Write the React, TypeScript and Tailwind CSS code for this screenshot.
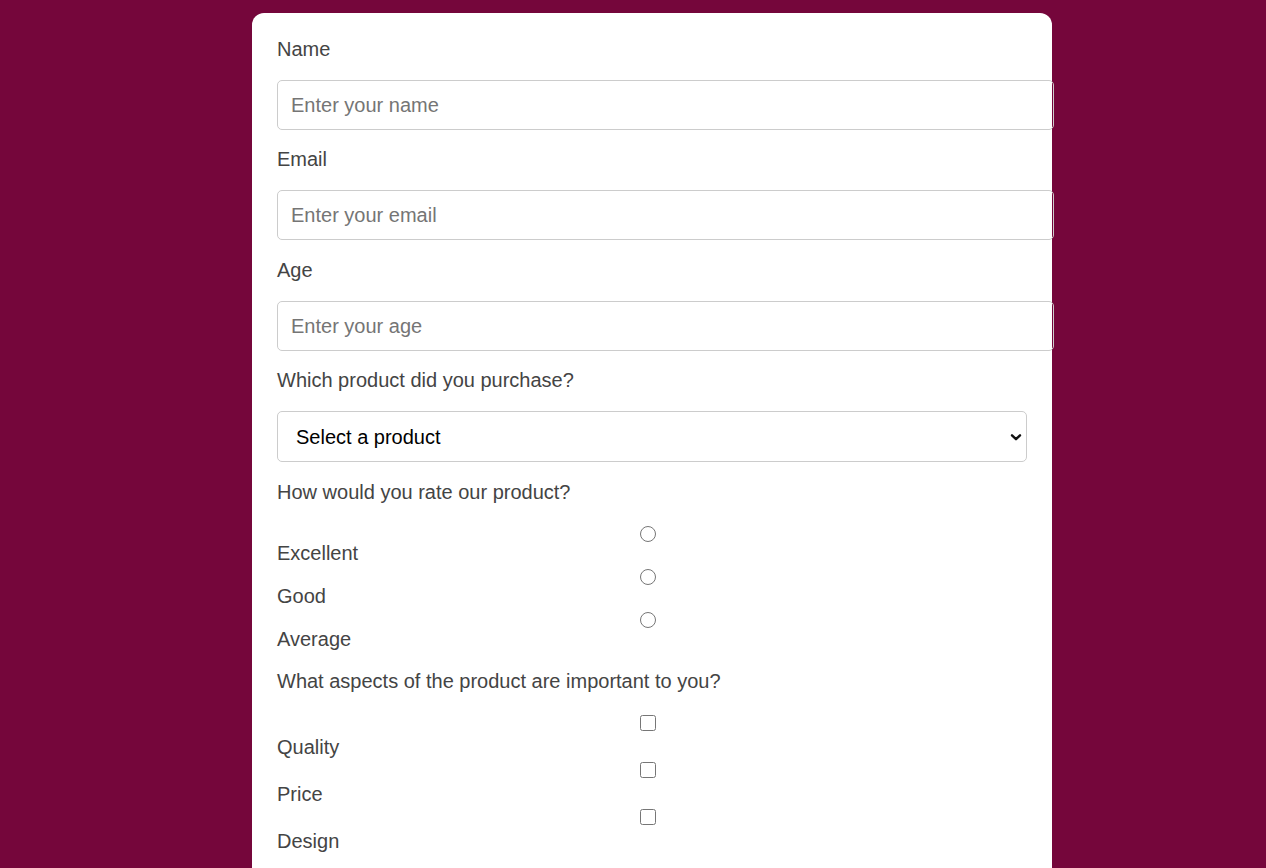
import React from 'react';

const font = { fontFamily: '"Liberation Sans", Arial, sans-serif' };

function Label({ children, className = '' }: { children: React.ReactNode; className?: string }) {
  return <label className={`block text-[20px] leading-[24px] text-[#444] ${className}`}>{children}</label>;
}

function TextField({ label, type, placeholder, mb }: { label: string; type: string; placeholder: string; mb: string }) {
  return (
    <div className={mb}>
      <Label className="mb-[19px]">{label}</Label>
      <input
        type={type}
        placeholder={placeholder}
        className="block h-[50px] w-[777px] rounded-[5px] border border-[#ccc] px-[13px] text-[20px] text-[#333] placeholder:text-[#757575] outline-none"
      />
    </div>
  );
}

export default function App() {
  return (
    <div className="min-h-screen bg-[#75063b] pt-[13px]" style={font}>
      <form className="ml-[252px] w-[800px] rounded-t-[12px] bg-white px-[25px] pt-[24px] pb-[40px]">
        <TextField label="Name" type="text" placeholder="Enter your name" mb="mb-[17px]" />
        <TextField label="Email" type="email" placeholder="Enter your email" mb="mb-[18px]" />
        <TextField label="Age" type="number" placeholder="Enter your age" mb="mb-[17px]" />

        <div className="mb-[18px]">
          <Label className="mb-[19px]">Which product did you purchase?</Label>
          <div className="relative w-[750px]">
            <select
              defaultValue=""
              className="block h-[51px] w-full appearance-none rounded-[5px] border border-[#ccc] bg-white pl-[18px] pr-[40px] text-[20px] text-black outline-none"
            >
              <option value="" disabled>
                Select a product
              </option>
              <option>Product A</option>
              <option>Product B</option>
              <option>Product C</option>
            </select>
            <svg
              className="pointer-events-none absolute right-[5px] top-1/2 h-[12px] w-[12px] -translate-y-1/2"
              viewBox="0 0 12 12"
              fill="none"
              stroke="#111"
              strokeWidth="2.4"
              strokeLinecap="round"
              strokeLinejoin="round"
            >
              <path d="M2 4.3 6 8.2 10 4.3" />
            </svg>
          </div>
        </div>

        {/* rating */}
        <Label className="mb-[18px]">How would you rate our product?</Label>
        <div className="mb-[18px] flex flex-col">
          {['Excellent', 'Good', 'Average'].map((r) => (
            <div key={r} className="flex flex-col">
              <input type="radio" name="rating" className="m-0 mt-[4px] ml-[363px] block h-[16px] w-[16px]" />
              <span className="-mt-[1px] block text-[20px] leading-[24px] text-[#444]">{r}</span>
            </div>
          ))}
        </div>

        {/* aspects */}
        <Label className="mb-[19px]">What aspects of the product are important to you?</Label>
        <div className="flex flex-col">
          {['Quality', 'Price', 'Design'].map((c) => (
            <div key={c} className="flex flex-col">
              <input type="checkbox" className="m-0 mt-[3px] mb-[4px] ml-[363px] block h-[16px] w-[16px]" />
              <span className="block text-[20px] leading-[24px] text-[#444]">{c}</span>
            </div>
          ))}
        </div>
      </form>
    </div>
  );
}
